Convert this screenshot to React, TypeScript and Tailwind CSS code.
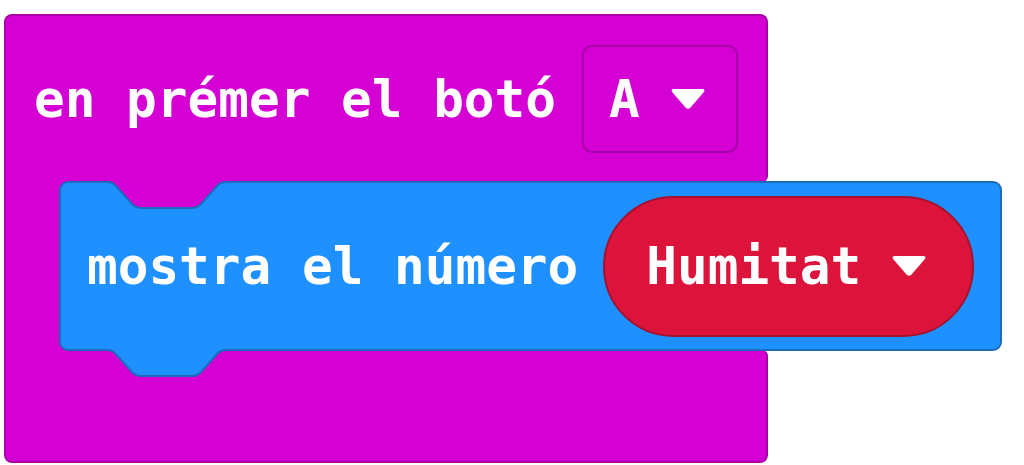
import React from 'react';

const Caret: React.FC = () => (
  <svg width="36" height="22" viewBox="0 0 36 22" className="shrink-0">
    <path d="M4 1 H32 Q36 1 33.5 4.5 L20.5 19.5 Q18 22 15.5 19.5 L2.5 4.5 Q0 1 4 1 Z" fill="#ffffff" />
  </svg>
);

// blue "mostra el número" statement, with notch on top and tab underneath
const StatementBlock: React.FC = () => (
  <div className="relative h-[168px] w-[941px] shrink-0">
    <svg width="941" height="196" viewBox="0 0 941 196" className="absolute left-0 top-0 overflow-visible">
      {/* hat block showing through the notch and the rounded left corners */}
      <rect x="-1" y="-1" width="176" height="30" fill="#d400d4" />
      <rect x="-1" y="150" width="14" height="19" fill="#d400d4" />
      <path
        d="M 0,8 A8,8 0 0 1 8,0 H 48 Q 52,0 55,3 L 72,22 Q 76,26 81,26 H 132 Q 137,26 141,22 L 158,3 Q 161,0 166,0 H 933 A8,8 0 0 1 941,8 V 160 A8,8 0 0 1 933,168 H 166 Q 161,168 158,171 L 141,190 Q 137,194 132,194 H 81 Q 76,194 72,190 L 55,171 Q 52,168 48,168 H 8 A8,8 0 0 1 0,160 Z"
        fill="#1e90ff"
        stroke="#1b6cbd"
        strokeWidth="2"
      />
    </svg>
    <div className="relative flex h-full items-center pl-[27px]">
      <span className="text-white">mostra el número</span>
      <div className="ml-[25px] flex h-[141px] w-[371px] items-center rounded-full border-2 border-[#a5122f] bg-[#dc143c] pl-[41px]">
        <span className="text-white">Humitat</span>
        <div className="ml-[30px]">
          <Caret />
        </div>
      </div>
    </div>
  </div>
);

export default function App() {
  return (
    <div className="h-[465px] w-[1024px] overflow-hidden bg-white pt-[14px] font-['DejaVu_Sans_Mono',monospace] text-[51px] font-bold leading-none">
      <div className="ml-[4px] flex w-[764px] flex-col">
        <div className="flex h-[168px] items-center rounded-t-[8px] rounded-br-[6px] border-2 border-b-0 border-[#a600a6] bg-[#d400d4] pl-[28px]">
          <span className="text-white">en prémer el botó</span>
          <div className="ml-[26px] flex h-[108px] w-[156px] items-center rounded-[10px] border-2 border-[#a600a6] pl-[25px]">
            <span className="text-white">A</span>
            <div className="ml-[30px]">
              <Caret />
            </div>
          </div>
        </div>
        <div className="relative z-10 flex h-[168px]">
          <div className="w-[56px] shrink-0 border-l-2 border-[#a600a6] bg-[#d400d4]" />
          <StatementBlock />
        </div>
        <div className="h-[113px] rounded-b-[8px] rounded-tr-[6px] border-2 border-t-0 border-[#a600a6] bg-[#d400d4]" />
      </div>
    </div>
  );
}
